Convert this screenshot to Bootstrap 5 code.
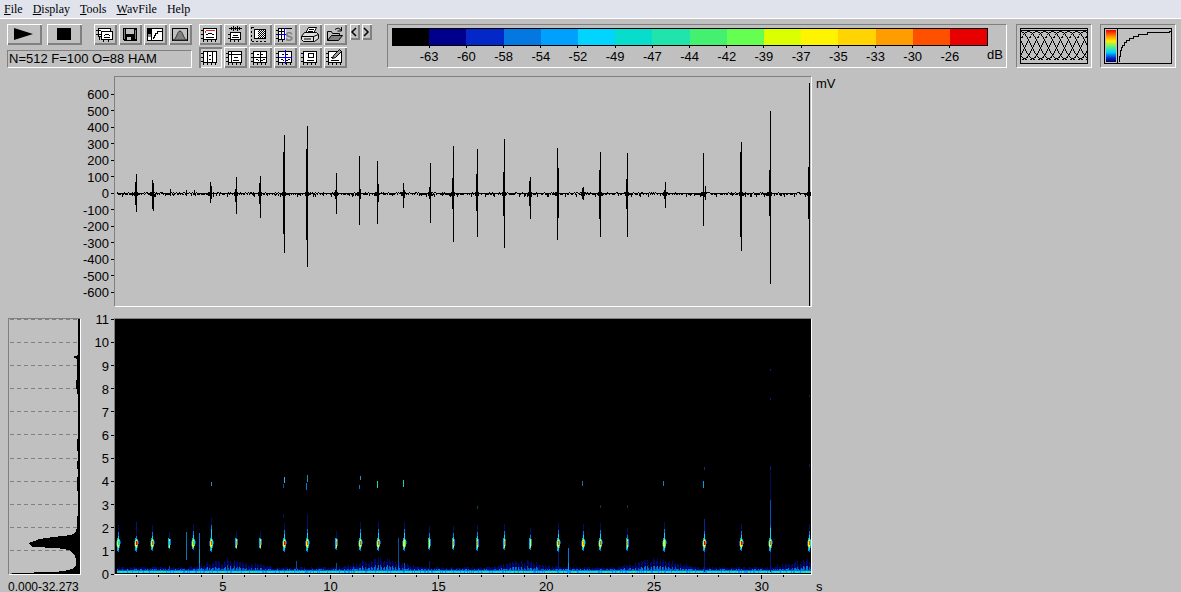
<!DOCTYPE html>
<html lang="en">
<head>
<meta charset="utf-8">
<meta name="viewport" content="width=device-width, initial-scale=1">
<title>Spectrogram</title>
<link rel="stylesheet" href="https://cdn.jsdelivr.net/npm/bootstrap@5.3.0/dist/css/bootstrap.min.css">
<style>
  body { background: #c0c0c0; color: #000; font: 13px/16px "Liberation Sans", Arial, sans-serif; }
  svg { display: block; shape-rendering: crispEdges; }
  .menubar { background: #e0e3ec; height: 19px; border-bottom: 1px solid #fff; font: 12px/18px "Liberation Serif", "Times New Roman", serif; padding-left: 4px; gap: 10px; }
  .menubar a { color: #000; text-decoration: none; }
  .toolbar { padding: 5px 5px 0 7px; min-height: 57px; }
  .tool { border: 0; padding: 0; background: #c0c0c0; width: 23px; height: 21px; box-shadow: inset 1px 1px #fff, inset -2px -2px #808080; }
  .tool.pushed { background: #ccc; box-shadow: inset 2px 2px #808080, inset -1px -1px #fff; }
  .tool-wide { width: 35px; }
  .tool-slim { width: 10px; height: 16px; }
  .group { gap: 2px; }
  .transport { gap: 5px; }
  .cursors { margin-left: 7px; gap: 3px; }
  .sunken { border: 1px solid; border-color: #808080 #fff #fff #808080; }
  .status { height: 18px; margin-top: 5px; padding-left: 1px; }
  .scale { height: 44px; margin-left: 15px; margin-right: 9px; padding: 3px 3px 0 4px; }
  .scale svg { height: 37px; overflow: visible; min-width: 0; }
  .thumb { width: 76px; height: 44px; padding: 3px; }
  .plots { display: grid; padding-left: 8px; grid-template-columns: 73px 33px minmax(0, 698fr) minmax(0, 369fr); grid-template-rows: 231fr 11px 257fr 17px; min-height: 440px; }
  .plots svg { width: 100%; height: 100%; }
  .axis { overflow: visible; }
  .cell { min-height: 0; min-width: 0; position: relative; }
  .cell > svg { position: absolute; inset: 0; }
  .r1 { grid-row: 1; } .r3 { grid-row: 3; } .r4 { grid-row: 4; }
  .c1 { grid-column: 1; } .c2 { grid-column: 2; } .c3 { grid-column: 3; } .c4 { grid-column: 4; }
  .range { font-size: 12px; line-height: 24px; white-space: nowrap; }
</style>
</head>
<body class="d-flex flex-column min-vh-100 overflow-hidden">

<nav class="menubar d-flex flex-shrink-0">
  <a href="#"><u>F</u>ile</a>
  <a href="#"><u>D</u>isplay</a>
  <a href="#"><u>T</u>ools</a>
  <a href="#"><u>W</u>avFile</a>
  <a href="#">Help</a>
</nav>

<svg width="0" height="0" class="position-absolute" aria-hidden="true">
  <defs>
    <g id="sheet">
      <path fill="#fff" stroke="#000" d="M4.500 4.500h13v11h-13z"/>
      <path stroke="#000" d="M2 6.500h2M2 10.500h2M2 14.500h2M4.500 16v2M8.500 16v2M12.500 16v2M16.500 16v2"/>
    </g>
    <path id="call" fill="none" stroke="#000" d="M7 10.500h2M9 9.500h4M13 10.500h2M7 13.500h8"/>
    <path id="split" fill="none" stroke="#000" d="M8 7.500h2M12 7.500h2M7 12.500h2M14 12.500h2M9 13.500h1M12 13.500h2"/>
    <pattern id="dots" width="2" height="2" patternUnits="userSpaceOnUse"><path d="M0 0h1v1H0zM1 1h1v1H1z"/></pattern>
    <linearGradient id="heat" x2="0" y2="1">
      <stop stop-color="#e80000"/><stop offset=".2" stop-color="#ff9000"/><stop offset=".35" stop-color="#fff000"/>
      <stop offset=".52" stop-color="#60f080"/><stop offset=".7" stop-color="#00d0ff"/><stop offset=".88" stop-color="#0428c8"/><stop offset="1" stop-color="#000060"/>
    </linearGradient>
  </defs>
</svg>

<header class="toolbar d-flex align-items-start flex-shrink-0">
  <div class="flex-shrink-0">
    <div class="d-flex">
      <div class="d-flex transport me-2">
        <button class="tool tool-wide" aria-label="Play"><svg width="35" height="21"><path shape-rendering="auto" d="M7 4l19 6-19 6z"/></svg></button>
        <button class="tool tool-wide" aria-label="Stop"><svg width="35" height="21"><path d="M10 4h14v12H10z"/></svg></button>
      </div>
      <div class="d-flex group ms-1">
        <button class="tool" aria-label="Copy"><svg width="23" height="21">
          <path fill="#fff" stroke="#000" d="M4.500 4.500h12v8h-12z"/><path fill="#fff" stroke="#000" d="M7.500 7.500h11v8h-11z"/><path fill="none" stroke="#000" d="M2 6.500h5M2 10.500h5M5.500 13v3M9.500 16v2M14.500 16v2M11 10.500h4M10 11.500h1M15 11.500h1M10 13.500h6"/></svg></button>
        <button class="tool" aria-label="Save"><svg width="23" height="21">
          <path d="M4 4h14v13H5l-1-1z"/><path fill="#c0c0c0" d="M7 5h8v5H7zM8 13h6v3H8z"/><path fill="#808080" d="M5 5h1v10H5zM16 6h1v9h-1z"/><path d="M12 13h2v3h-2z"/></svg></button>
        <button class="tool" aria-label="Transfer curve"><svg width="23" height="21">
          <path fill="#fff" stroke="#000" d="M3.500 4.500h15v12h-15z"/><path d="M4 5h3v5H4z"/><path fill="#888" d="M4 10h3v3H4z"/><path fill="none" stroke="#000" d="M7.500 5v11M9.500 15v-2h1v-2h1v-2h2v-2h4"/></svg></button>
        <button class="tool" aria-label="Window"><svg width="23" height="21">
          <path fill="#c0c0c0" stroke="#000" d="M3.500 4.500h15v12h-15z"/><path shape-rendering="auto" fill="#808080" stroke="#333" d="M4 16c4-1 4-9 7-9s3 8 7 9z"/></svg></button>
      </div>
    </div>
    <div class="status sunken">N=512 F=100 O=88 HAM</div>
  </div>

  <div class="cursors d-flex flex-shrink-0">
    <div class="d-flex flex-column group">
      <div class="d-flex group">
        <button class="tool" aria-label="Spectrogram"><svg width="23" height="21"><use href="#sheet"/><use href="#call"/><path stroke="#e02030" d="M7 6.500h9M6.500 7v2"/></svg></button>
        <button class="tool" aria-label="Waveform"><svg width="23" height="21">
          <path fill="#fff" stroke="#000" d="M6.500 8.500h10v7h-10z"/><path stroke="#000" d="M5 4.500h13M7.500 3v3M9.500 2v5M11.500 3v3M13.500 2v5M15.500 3v3M4 10.500h2M4 14.500h2M6.500 16v2M10.500 16v2M14.500 16v2M9 11.500h5M8 13.500h7"/></svg></button>
        <button class="tool" aria-label="Select area"><svg width="23" height="21">
          <path fill="#fff" stroke="#000" d="M5.500 5.500h11v9h-11z"/><path fill="url(#dots)" d="M9 6h7v8H9z"/><path stroke="#000" stroke-dasharray="2 2" d="M2.500 3v14M3 3.500h4M3 17.500h16"/></svg></button>
        <button class="tool" aria-label="Synthesize"><svg width="23" height="21">
          <path fill="#fff" d="M4 4h8v12H4z"/><path fill="none" stroke="#000" d="M17.500 4v1M4 4.500h14M4.500 4v12M4 15.500h6M2 6.500h2M2 10.500h2M2 14.500h2M4.500 16v2M8.500 16v2M7.500 5v10M5 7.500h5"/><path stroke="#00d" d="M10.500 4v12M5 10.500h7"/><text x="11" y="17" font-size="12" font-weight="700" fill="#808080">S</text></svg></button>
        <button class="tool" aria-label="Print"><svg width="23" height="21"><g shape-rendering="auto" stroke="#000">
          <path fill="#fff" d="M6.500 9.500l3-6h8l-3 6z"/><path fill="#ddd" d="M2.500 12.500l3-4h12l2 2v4l-4 3h-11l-2-2z"/><path fill="none" d="M2.500 12.500h12v5M14.500 12.500l5-2M5 15h7M10 5.500h5M9 7.500h5"/></g></svg></button>
        <button class="tool" aria-label="Open"><svg width="23" height="21"><g shape-rendering="auto" stroke="#000">
          <path fill="#c0c0c0" d="M3.500 16.500v-9h4l1 2h7v3"/><path fill="#808080" d="M3.500 16.500l4-5h11l-4 5z"/><path fill="none" d="M11 5.500q4-3 6 1M17.500 3v4h-4"/></g></svg></button>
      </div>
      <div class="d-flex group">
        <button class="tool pushed" aria-label="Vertical cursors"><svg width="23" height="21"><use href="#sheet"/><path stroke="#000" d="M8.500 4v12M13.500 4v12M10 8.500h2M10 12.500h2"/></svg></button>
        <button class="tool" aria-label="Single cursor"><svg width="23" height="21"><use href="#sheet"/><path stroke="#000" d="M7.500 4v12M5 7.500h13M10 10.500h4M9 13.500h6"/></svg></button>
        <button class="tool" aria-label="Cross cursor"><svg width="23" height="21"><use href="#sheet"/><use href="#split"/><path stroke="#000" d="M11.500 4v12M5 10.500h13"/></svg></button>
        <button class="tool" aria-label="Harmonic cursor"><svg width="23" height="21"><use href="#sheet"/><use href="#split"/><path stroke="#00d" d="M11.500 3v14M5 10.500h13"/></svg></button>
        <button class="tool" aria-label="Box cursor"><svg width="23" height="21"><use href="#sheet"/><path fill="#fff" stroke="#000" d="M9.500 6.500h5v4h-5z"/><path stroke="#000" d="M8 13.500h7"/></svg></button>
        <button class="tool" aria-label="Edit"><svg width="23" height="21"><use href="#sheet"/><path stroke="#000" d="M7 10.500h2M7 13.500h8"/><path shape-rendering="auto" fill="#999" stroke="#000" d="M8.500 11.500l1-3 6-6 2 2-6 6z"/></svg></button>
      </div>
    </div>
    <div class="d-flex group">
      <button class="tool tool-slim" aria-label="Previous"><svg width="10" height="16"><path shape-rendering="auto" fill="none" stroke="#000" stroke-width="1.500" d="M6 4L2 8l4 4"/></svg></button>
      <button class="tool tool-slim" aria-label="Next"><svg width="10" height="16"><path shape-rendering="auto" fill="none" stroke="#000" stroke-width="1.500" d="M2 4l4 4-4 4"/></svg></button>
    </div>
  </div>

  <div class="scale sunken d-flex flex-fill">
    <svg id="scale" class="flex-fill"></svg>
    <span class="align-self-end pb-1">dB</span>
  </div>
  <div class="thumb sunken flex-shrink-0"><svg width="68" height="36" id="overlap"></svg></div>
  <div class="thumb sunken flex-shrink-0 ms-2"><svg width="68" height="36">
    <path fill="none" stroke="#000" d="M.5.500h67v35H.5zM13.500 0v36"/>
    <path fill="url(#heat)" d="M2 2h10v32H2z"/>
    <path fill="none" stroke="#000" d="M15.500 34v-6h1v-6h1v-3h1v-2h2v-3h2v-2h3v-2h4v-2h5v-2h9v-2h22v-1h2"/></svg></div>
</header>

<main class="plots flex-fill">
  <div class="cell r1 c2"><svg class="axis" id="voltAxis"></svg></div>
  <div class="cell r1 c3 sunken"><svg id="wave" viewBox="0 0 696 229" preserveAspectRatio="none"></svg></div>
  <div class="r1 c4 ps-1">mV</div>
  <div class="cell r3 c1 sunken"><svg id="mean" viewBox="0 0 71 255" preserveAspectRatio="none"></svg></div>
  <div class="cell r3 c2"><svg class="axis" id="freqAxis"></svg></div>
  <div class="cell r3 c3 sunken"><svg id="sono" viewBox="0 0 696 255" preserveAspectRatio="none"></svg></div>
  <div class="r4 c1 range">0.000-32.273</div>
  <div class="cell r4 c3"><svg class="axis" id="timeAxis"></svg></div>
  <div class="r4 c4 ps-1 pt-1">s</div>
</main>

<script src="https://cdn.jsdelivr.net/npm/bootstrap@5.3.0/dist/js/bootstrap.bundle.min.js"></script>
<script>
const put = (id, html) => { document.getElementById(id).innerHTML = html; };
let seed = 7;
const rnd = () => (seed = (seed * 16807) % 2147483647) / 2147483647;

/* Rectangles are painted in order; neighbours of one colour share a path. */
function painter() {
  const layers = [];
  return {
    box(c, x, y, w, h) {
      if (!layers.length || layers[layers.length - 1][0] !== c) layers.push([c, '']);
      layers[layers.length - 1][1] += `M${x} ${y}h${w}v${h}h${-w}z`;
    },
    html() { return layers.map(([c, d]) => `<path fill="${c}" d="${d}"/>`).join(''); }
  };
}

/* Decibel scale */
const shades = ['#000', '#00008c', '#0428c8', '#0478e0', '#00a0ff', '#00d4ff', '#08dccc', '#20e4ac', '#44f070', '#64ff50', '#dcff00', '#fff400', '#ffd400', '#ff9c00', '#ff5000', '#e80000'];
const levels = [-63, -60, -58, -54, -52, -49, -47, -44, -42, -39, -37, -35, -33, -30, -26];
put('scale', shades.map((c, i) => `<rect x="${i * 6.25}%" width="6.25%" height="17" fill="${c}"/>`).join('')
  + '<rect x="0" width="100%" height="17" fill="none" stroke="#000"/>'
  + levels.map((v, i) => { const p = (i + 1) * 6.25 + '%'; return `<line x1="${p}" x2="${p}" y1="17" y2="20" stroke="#000"/><text x="${p}" y="33" text-anchor="middle">${v}</text>`; }).join(''));

/* Overlapping analysis windows */
let bells = '';
for (let c = -16; c < 90; c += 8) {
  for (let x = -22; x <= 22; x++) {
    const px = c + x, at = v => Math.round(17 - 14 * Math.cos(v / 22 * Math.PI));
    if (px > 0 && px < 67) bells += `M${px} ${at(x)}h1v${Math.max(1, Math.abs(at(x + 1) - at(x)))}h-1z`;
  }
}
put('overlap', `<path fill="none" stroke="#000" d="M.5.500h67v35H.5zM0 2.500h68"/><path d="${bells}"/>`);

/* Axes */
let axis = '';
for (let v = 600; v >= -600; v -= 100) {
  const y = (117 - v * 0.165) / 231 * 100 + '%';
  axis += `<line x1="30" x2="34" y1="${y}" y2="${y}" stroke="#000"/><text x="28" y="${y}" dy="5" text-anchor="end">${v}</text>`;
}
put('voltAxis', axis);
axis = '';
for (let f = 0; f <= 11; f++) {
  const y = (256 - f * 23.15) / 257 * 100 + '%';
  axis += `<line x1="30" x2="34" y1="${y}" y2="${y}" stroke="#000"/><text x="28" y="${y}" dy="5" text-anchor="end">${f}</text>`;
}
put('freqAxis', axis);
axis = '';
for (let t = 1; t <= 31; t++) {
  const x = (1 + t * 21.56) / 698 * 100 + '%', major = t % 5 === 0;
  axis += `<line x1="${x}" x2="${x}" y1="0" y2="${major ? 4 : 2}" stroke="#000"/>`;
  if (major) axis += `<text x="${x}" y="16" text-anchor="middle">${t}</text>`;
}
put('timeAxis', axis);

/* Waveform: x, top, bottom, then body x, top, bottom */
const pulses = [
  [21, 97, 135, 20, 105, 128], [37, 103, 132, 38, 106, 134], [55, 112, 119], [71, 113, 119], [79, 113, 118],
  [95, 105, 126, 96, 109, 122], [121, 100, 137, 120, 112, 125], [145, 99, 141, 144, 106, 127], [169, 58, 176, 168, 75, 157],
  [192, 49, 190, 191, 72, 163], [221, 96, 137, 220, 113, 122], [244, 79, 148, 245, 112, 122], [262, 84, 147, 263, 107, 125], [288, 106, 131, 289, 113, 121],
  [315, 86, 146, 314, 110, 122], [338, 69, 165, 337, 101, 132], [362, 72, 160, 361, 97, 134], [389, 62, 171, 388, 95, 139],
  [415, 100, 142, 414, 104, 129], [442, 71, 163, 443, 91, 141], [468, 110, 123, 467, 111, 122], [485, 75, 160, 484, 93, 142],
  [512, 76, 160, 511, 102, 132], [550, 105, 131, 549, 113, 122], [588, 76, 149, 590, 109, 123], [626, 65, 174, 625, 75, 160],
  [655, 34, 207, 654, 93, 139], [694, 6, 229, 693, 90, 142]
];
const wave = painter();
for (let x = 2; x < 693; x++) {
  wave.box('#000', x, rnd() < .2 ? 115 : 116, 1, 1 + Math.floor(rnd() * 2));
  if (rnd() < .25) wave.box('#000', x, 117, 1, 1 + Math.floor(rnd() * 3));
}
for (const [x, a, b, bx, ba, bb] of pulses) {
  wave.box('#000', x, a, 1, b - a);
  if (bx !== undefined) { wave.box('#000', bx, ba, 1, bb - ba); wave.box('#000', x - 2, 115, 4, 4); }
}
put('wave', wave.html());

/* Mean spectrum */
let grid = '';
for (let f = 0; f <= 11; f++) { const y = Math.round(255 - f * 23.1) - .5; grid += `M1 ${y}h68`; }
put('mean', `<path stroke="#808080" stroke-dasharray="4 3" d="${grid}"/>
  <path d="M71 0H69V36L64 38L68 40V60L67 62V70H68L69 80V120H68V132H69V142H68V150H69V158H68V172H69V195L68 200V209L66 214L62 216L45 218L30 220L26 222L19 224L21 226L24 228L48 229L60 231L65 235L67 240V246L65 249L60 251L46 253L3 254V255H71Z"/>`);

/* Sonogram */
const s = painter();
s.box('#000', 0, 0, 696, 255);
const hills = [[115, 45, 9], [265, 45, 10], [408, 40, 8], [541, 42, 10], [692, 40, 9]];
for (let x = 2; x < 696; x++) {
  let h = 4 + Math.floor(rnd() * 3);
  for (const [c, w, a] of hills) {
    const d = Math.abs(x - c) / w;
    if (d < 1 && x % 3 !== 0) h += Math.round(a * (1 - d) * (.5 + rnd() * .6));
  }
  s.box('#000878', x, 254 - h, 1, h);
  const mid = Math.min(h - 1, 3 + Math.floor(rnd() * 2 + Math.max(0, h - 7) / 2));
  s.box(rnd() < .5 ? '#0458c8' : '#0478e0', x, 254 - mid, 1, mid);
  s.box(['#00a0ff', '#00d4ff', '#08dccc', '#20e4ac'][Math.floor(rnd() * 4)], x, 252, 1, 2);
}
/* Calls: x, top, bottom, core colour, and whether the call is wide */
const calls = [
  [3, 213, 233, '#08dccc', 1], [21, 217, 233, '#e80000', 1], [37, 213, 232, '#ff5000', 1], [54, 220, 230, '#00d4ff', 0], [78, 212, 231, '#20e4ac', 1],
  [96, 206, 233, '#ff5000', 1], [121, 219, 230, '#ff9c00', 0], [145, 219, 230, '#ff9c00', 0], [169, 211, 233, '#e80000', 1], [192, 210, 233, '#ff5000', 1],
  [221, 219, 231, '#ff9c00', 0], [245, 210, 232, '#ff5000', 1], [263, 210, 232, '#ff5000', 1], [289, 210, 232, '#dcff00', 1], [314, 214, 231, '#dcff00', 0],
  [338, 214, 231, '#ff9c00', 0], [362, 213, 232, '#ff9c00', 0], [389, 212, 231, '#ff9c00', 0], [415, 216, 231, '#dcff00', 0], [443, 211, 233, '#ff5000', 1],
  [468, 212, 232, '#ff9c00', 1], [485, 211, 232, '#ff5000', 1], [512, 216, 232, '#ff9c00', 0], [549, 210, 233, '#dcff00', 1], [589, 211, 233, '#e80000', 1],
  [626, 212, 232, '#e80000', 1], [655, 205, 233, '#ff5000', 1], [694, 212, 233, '#ff5000', 1]
];
for (const [x, a, b, core, wide] of calls) {
  const m = Math.min(219, b - 11);
  s.box('#001060', x, a - 7, 1, 7);
  s.box('#0478e0', x, a, 1, b - a);
  s.box('#00d4ff', x, a + 4, 1, b - a - 6);
  s.box('#08b0e0', x - 1, m, 1, b - m - 1);
  s.box('#0478e0', x + 1, m + 1, 1, b - m - 5);
  s.box('#64ff50', x, m + 1, 1, 9);
  if (wide) {
    s.box('#0450c0', x - 2, m + 3, 1, 5);
    s.box('#0450c0', x + 2, m + 3, 1, 3);
    s.box('#64ff50', x - 1, m + 2, 1, 7);
    s.box('#20e4ac', x + 1, m + 2, 1, 6);
    s.box('#fff400', x - 1, m + 4, 1, 4);
  }
  s.box('#fff400', x, m + 2, 1, 7);
  s.box(core, x, m + 3, 1, 4);
  if (core === '#e80000') s.box('#ff5000', x + 1, m + 4, 1, 3);
}
/* Thin clicks and overtones: colour, x, top, height */
[['#0478b0', 71, 213, 28], ['#0478e0', 84, 214, 36], ['#00a0c0', 84, 230, 14], ['#0450a0', 283, 219, 28], ['#0478e0', 453, 229, 26], ['#00a0ff', 453, 244, 10],
 ['#0450c0', 655, 181, 26], ['#001878', 655, 233, 20], ['#001878', 589, 233, 20], ['#001878', 443, 233, 18], ['#0428a0', 589, 200, 12], ['#000c50', 655, 147, 34],
 ['#2090b0', 96, 163, 4], ['#30b0e0', 169, 158, 6], ['#0450a0', 168, 165, 4], ['#2090b0', 192, 156, 7], ['#0478e0', 191, 164, 7], ['#3090b0', 245, 157, 4], ['#0478e0', 244, 166, 4],
 ['#20d0b0', 262, 162, 7], ['#20d0b0', 288, 161, 7], ['#2070a0', 467, 162, 5], ['#1080c0', 548, 162, 5], ['#00a0e0', 588, 162, 7], ['#104060', 362, 187, 3],
 ['#103060', 485, 186, 3], ['#302840', 512, 186, 3], ['#103070', 589, 148, 3], ['#101880', 655, 148, 3], ['#101880', 655, 50, 2], ['#101880', 655, 79, 2],
 ['#181870', 694, 76, 2], ['#101860', 694, 145, 3], ['#001878', 21, 203, 8], ['#001060', 168, 195, 4], ['#001060', 192, 195, 8], ['#0450a0', 54, 247, 4], ['#0450a0', 221, 244, 7],
 ['#0450a0', 181, 242, 8], ['#001878', 314, 242, 8], ['#0450c0', 289, 244, 6]
].forEach(([c, x, y, h]) => s.box(c, x, y, 1, h));
put('sono', s.html());
</script>
</body>
</html>
